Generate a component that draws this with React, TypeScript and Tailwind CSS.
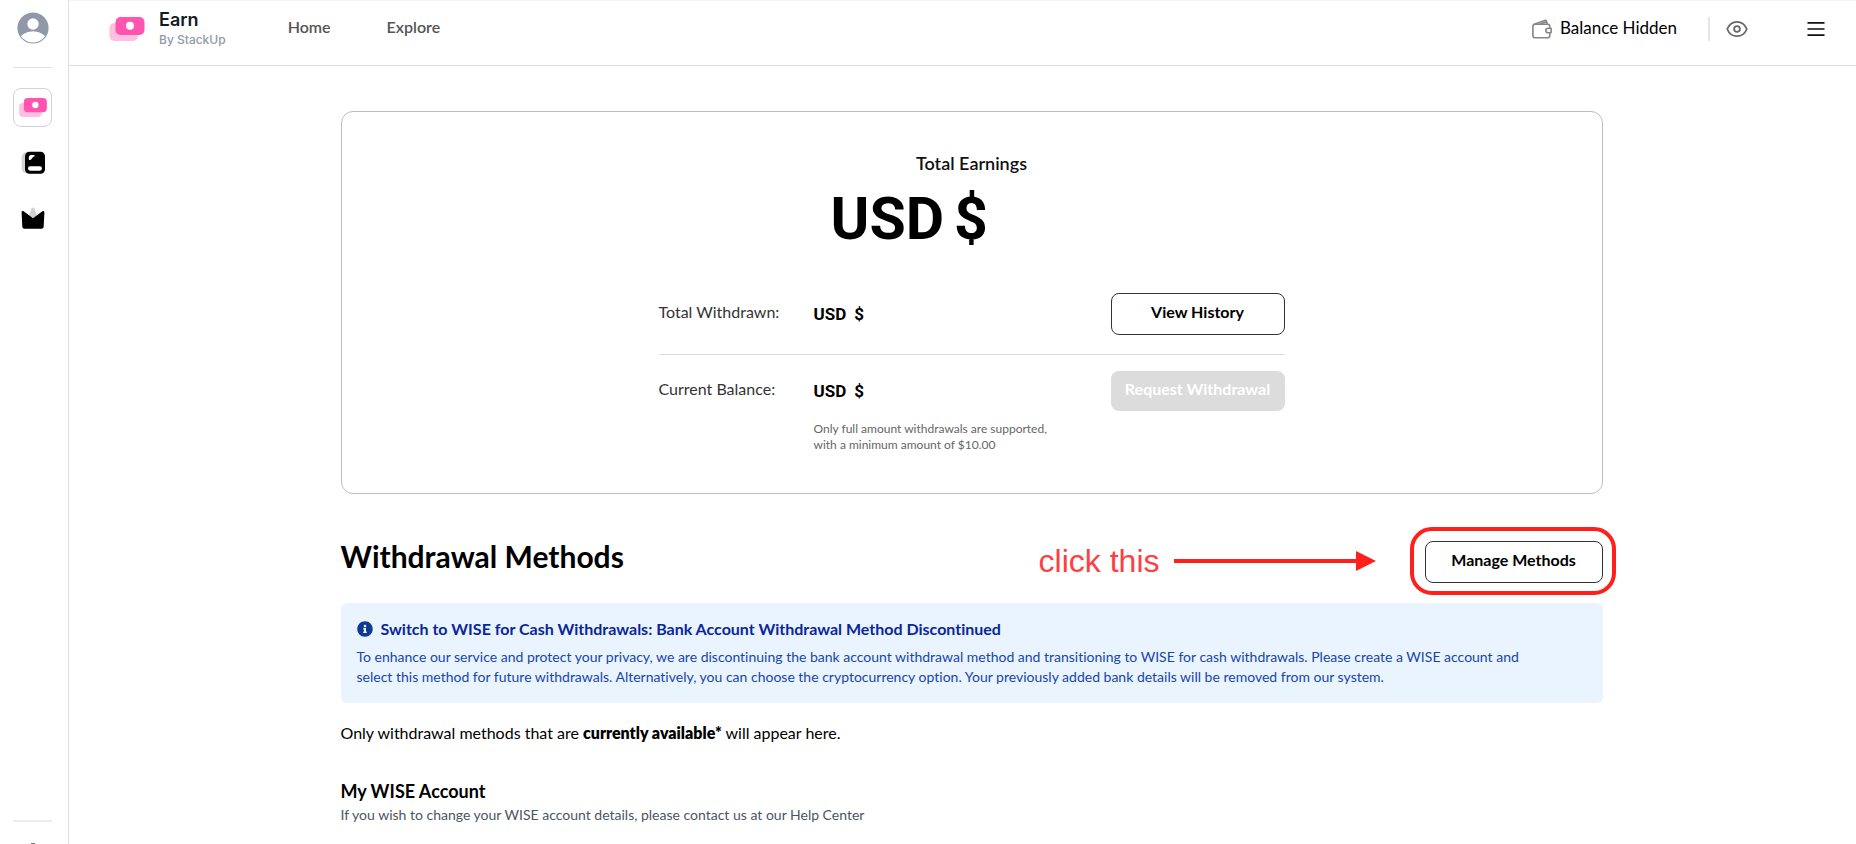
import React from "react";
import { FaInfoCircle } from "react-icons/fa";

function EarnLogo({ className }: { className: string }) {
  return (
    <svg viewBox="0 0 35 24" className={className} aria-hidden="true">
      <rect x="0" y="6" width="28.5" height="18" rx="5" fill="#ffbfe0" />
      <rect x="6" y="0" width="29" height="18" rx="5" fill="#ff54b0" />
      <circle cx="20.5" cy="8.8" r="4" fill="#fff" />
    </svg>
  );
}

function AvatarIcon() {
  return (
    <svg viewBox="0 0 32 32" className="size-8" aria-hidden="true">
      <defs>
        <clipPath id="avatar-clip">
          <circle cx="16" cy="16" r="14.6" />
        </clipPath>
      </defs>
      <circle cx="16" cy="16" r="15.6" fill="#9199a8" />
      <circle cx="16" cy="12" r="5.7" fill="#fff" />
      <ellipse cx="16" cy="28.5" rx="13.5" ry="9.3" fill="#fff" clipPath="url(#avatar-clip)" />
    </svg>
  );
}

function BookIcon() {
  return (
    <svg viewBox="0 0 24 24" className="size-6" aria-hidden="true">
      <rect x="0.7" y="1.2" width="18" height="21" rx="5" fill="#d3d3d3" />
      <rect x="4" y="0.8" width="20" height="22" rx="4.5" fill="#000" />
      <rect x="7" y="15.3" width="14" height="4.4" rx="2.1" fill="#fff" />
      <path d="M7.8 8.2V6.4C7.8 5 8.8 4 10.2 4h2.600c1 0 1.200 1 .4 1.500l-1 .6c-.6.4-1 .8-1.300 1.400-.5.9-1 1.200-1.900 1.400-.7.1-1.200-.1-1.200-.7Z" fill="#fff" />
    </svg>
  );
}

function CrownIcon() {
  return (
    <svg viewBox="0 0 24 24" className="size-6" aria-hidden="true">
      <path d="M7.500 11 10.700 2.300c.6-1.200 2-1.200 2.600 0L16.500 11 12 14Z" fill="#d3d3d3" />
      <path d="M.6 6.300c0-1.200 1-1.700 2-1.100L12 12.300l9.400-7.100c1-.6 2-.1 2 1.100l-.7 14.300c-.1 1.400-.9 2.200-2.300 2.200H3.600c-1.400 0-2.200-.8-2.300-2.200Z" fill="#000" />
    </svg>
  );
}

function WalletIcon() {
  return (
    <svg viewBox="0 0 20 20" className="size-5" fill="none" stroke="#858585" strokeWidth="1.600" strokeLinejoin="round" strokeLinecap="round" aria-hidden="true">
      <path d="M17.800 8.300V7.500c0-1.300-.9-2.200-2.200-2.200H3.200C1.900 5.300.9 6.200.9 7.500v9c0 1.300 1 2.300 2.300 2.300h12.400c1.300 0 2.200-1 2.200-2.300v-1.600" />
      <path d="M19.100 9.200h-2.700c-1.500 0-2.600 1-2.600 2.300s1.100 2.300 2.600 2.300h2.700Z" />
      <path d="M2.200 5.200 12.700 1.400c.8-.3 1.400 0 1.700.8l1 3M8.500 5.100l5.300-2" />
    </svg>
  );
}

function EyeIcon() {
  return (
    <svg viewBox="0 0 22 18" className="h-4.5 w-5.5" fill="none" stroke="#686868" strokeWidth="1.800" strokeLinejoin="round" aria-hidden="true">
      <path d="M1.200 9C3 4.500 6.600 1.800 11 1.800S19 4.500 20.800 9C19 13.500 15.400 16.200 11 16.200S3 13.500 1.200 9Z" />
      <circle cx="11" cy="9" r="2.900" />
    </svg>
  );
}

function MenuIcon() {
  return (
    <svg viewBox="0 0 18 16" className="h-4 w-4.5" stroke="#111" strokeWidth="1.700" aria-hidden="true">
      <path d="M.5 1.800h17M.5 8h17M.5 14.200h17" />
    </svg>
  );
}

function Sidebar() {
  return (
    <aside className="sticky top-0 flex h-screen w-[69px] shrink-0 flex-col items-center overflow-hidden border-r border-[#dcdfe6] pr-[3px]">
      <button aria-label="Profile" className="mt-3">
        <AvatarIcon />
      </button>
      <hr className="mt-[23px] w-[39px] border-[#dfe1e5]" />
      <nav aria-label="Apps" className="mt-5 flex flex-col items-center">
        <a href="#earn" aria-label="Earn" className="flex size-[39px] items-center justify-center rounded-lg border border-[#cfd3da]">
          <EarnLogo className="h-[19px] w-7" />
        </a>
        <a href="#learn" aria-label="Learn" className="mt-6">
          <BookIcon />
        </a>
        <a href="#rewards" aria-label="Rewards" className="mt-[31px]">
          <CrownIcon />
        </a>
      </nav>
      <hr className="mt-auto w-[39px] border-t-2 border-[#ececec]" />
      <a href="#help" aria-label="Help" className="mt-[21px] -mb-[23px]">
        <svg viewBox="0 0 24 24" className="size-6" fill="none" stroke="#777" strokeWidth="2" aria-hidden="true">
          <circle cx="12" cy="12" r="8" />
          <path d="M10 .8h4" />
        </svg>
      </a>
    </aside>
  );
}

function Header() {
  return (
    <header className="flex h-[66px] items-start border-b border-[#dcdfe3] pr-[31px] pl-10 shadow-[inset_0_1px_0_#f4f4f4]">
      <a href="#earn" className="flex gap-3.5 pt-2">
        <EarnLogo className="mt-[9px] h-6 w-9" />
        <span className="flex flex-col font-['Inter',sans-serif]">
          <span className="text-lg/6 font-semibold text-[#141b26]">Earn</span>
          <span className="text-xs/4 font-medium text-[#9199a8]">By StackUp</span>
        </span>
      </a>
      <nav aria-label="Main" className="ml-[62px] flex gap-14 pt-[15px] text-base/6 font-semibold text-[#555]">
        <a href="#home">Home</a>
        <a href="#explore">Explore</a>
      </nav>
      <div className="ml-auto flex items-center pt-4">
        <WalletIcon />
        <span className="ml-2 pb-0.5 text-[17px]/6 text-black">Balance Hidden</span>
        <span className="ml-[31px] h-6 w-0.5 bg-[#e6e6e6]" />
        <button aria-label="Show balance" className="ml-4">
          <EyeIcon />
        </button>
        <button aria-label="Menu" className="ml-[59px]">
          <MenuIcon />
        </button>
      </div>
    </header>
  );
}

function Amount() {
  return (
    <span className="flex flex-1 gap-2 font-['Roboto',sans-serif] text-[17px]/6 font-bold">
      <span>USD</span>
      <span>$</span>
    </span>
  );
}

const outlineButton = "h-[42px] rounded-lg border border-[#333] pb-1 text-base font-bold text-black";

function EarningsCard() {
  return (
    <section className="flex flex-col items-center rounded-xl border border-[#bdbdbd] pt-[39px] pb-10">
      <h2 className="text-lg/6 font-semibold text-[#111]">Total Earnings</h2>
      <div className="mt-3.5 flex w-full max-w-[626px]">
        <p className="ml-[172px] flex gap-2.5 font-['Roboto',sans-serif] text-[59px]/[60px] font-bold">
          <span>USD</span>
          <span>$</span>
        </p>
      </div>
      <div className="mt-11 w-full max-w-[626px]">
        <div className="flex items-center border-b border-[#dcdcdc] pb-[19px]">
          <span className="w-[155px] pb-1 text-base/6 text-[#333]">Total Withdrawn:</span>
          <Amount />
          <button className={`${outlineButton} w-[174px]`}>View History</button>
        </div>
        <div className="mt-4 flex items-center">
          <span className="w-[155px] pb-1 text-base/6 text-[#333]">Current Balance:</span>
          <Amount />
          <button disabled className="h-10 w-[174px] rounded-lg bg-[#dcdcdc] pb-1 text-base font-bold text-white">
            Request Withdrawal
          </button>
        </div>
        <p className="mt-2.5 ml-[155px] text-xs/4 text-[#666]">
          Only full amount withdrawals are supported,
          <br />
          with a minimum amount of $10.00
        </p>
      </div>
    </section>
  );
}

function ClickHint() {
  return (
    <div className="pointer-events-none absolute top-[-14px] right-[-13px] flex items-center gap-3.5">
      <span className="font-['Liberation_Sans',sans-serif] text-[32px]/9 whitespace-nowrap text-[#ff4040]">click this</span>
      <svg viewBox="0 0 202 20" className="h-5 w-[202px]" fill="#ff201c" aria-hidden="true">
        <path d="M0 8h182V0l20 10-20 10v-8H0Z" />
      </svg>
      <span className="ml-5 h-[68px] w-[206px] rounded-[22px] border-4 border-[#ff201c]" />
    </div>
  );
}

function WithdrawalMethods() {
  return (
    <section>
      <div className="mt-11 flex items-start justify-between">
        <h1 className="text-3xl/9 font-bold text-black">Withdrawal Methods</h1>
        <div className="relative mt-[3px]">
          <button className={`${outlineButton} w-[178px]`}>Manage Methods</button>
          <ClickHint />
        </div>
      </div>
      <div className="mt-5 rounded-md bg-[#e9f4fe] px-4 pt-3.5 pb-4">
        <h3 className="flex items-center gap-2 text-base/6 font-bold text-[#0a2799]">
          <FaInfoCircle className="size-4 text-[#103a92]" aria-hidden="true" />
          Switch to WISE for Cash Withdrawals: Bank Account Withdrawal Method Discontinued
        </h3>
        <p className="mt-1.5 pr-10 text-sm/5 text-[#1746a8]">
          To enhance our service and protect your privacy, we are discontinuing the bank account withdrawal method and
          transitioning to WISE for cash withdrawals. Please create a WISE account and select this method for future
          withdrawals. Alternatively, you can choose the cryptocurrency option. Your previously added bank details will be
          removed from our system.
        </p>
      </div>
      <p className="mt-[18px] text-base/6 text-black">
        Only withdrawal methods that are <strong className="font-extrabold">currently available*</strong> will appear here.
      </p>
      <h3 className="mt-[34px] text-lg/6 font-bold text-black">My WISE Account</h3>
      <p className="mt-0.5 text-sm/5 text-[#4b5563]">
        If you wish to change your WISE account details, please contact us at our Help Center
      </p>
    </section>
  );
}

export default function App() {
  return (
    <div className="flex min-h-screen bg-white font-['Lato',sans-serif] text-black [font-variant-ligatures:none]">
      <Sidebar />
      <div className="min-w-0 flex-1">
        <Header />
        <main className="pt-[45px] pl-[18px]">
          <div className="mx-auto w-full max-w-[1262px]">
            <EarningsCard />
            <WithdrawalMethods />
          </div>
        </main>
      </div>
    </div>
  );
}
